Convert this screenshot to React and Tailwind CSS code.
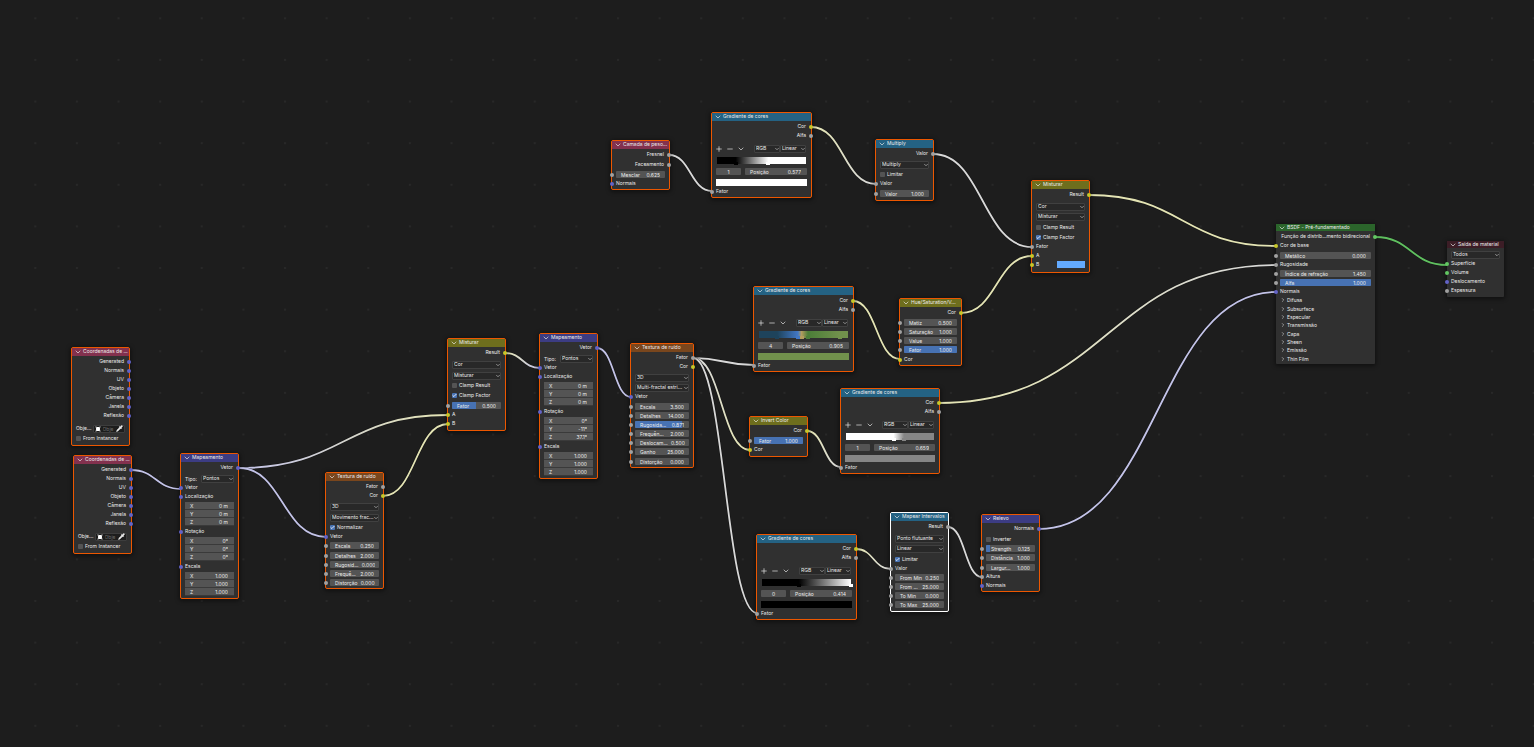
import React from "react";
import { Check, ChevronDown, ChevronRight, Minus, Pipette, Plus } from "lucide-react";

const SOCKET = {
  vector: "bg-[#6363c7]",
  value: "bg-[#a1a1a1]",
  color: "bg-[#c7c729]",
  shader: "bg-[#63c763]",
};

const WIRE = { vector: "#c3c3e8", value: "#d8d8d8", color: "#e4e4b4", shader: "#5fbf5f" };

const HEADER = {
  input: "bg-[#83314e]",
  vector: "bg-[#3c3c83]",
  texture: "bg-[#79461d]",
  color: "bg-[#6e6e1d]",
  converter: "bg-[#246283]",
  shader: "bg-[#2b652b]",
  output: "bg-[#3c1d26]",
};

const GAP = ["", "mt-px", "mt-[2px]", "mt-[3px]", "mt-1", "mt-[5px]"];

function Socket({ type, side }) {
  return (
    <span
      className={`absolute top-[3px] z-10 h-1 w-1 rounded-full ${side === "left" ? "left-[-2px]" : "right-[-2px]"} ${SOCKET[type]}`}
    />
  );
}

function Node({ title, tone, className, state = "selected", children }) {
  const edge = {
    selected: "rounded-[2px] border border-[#ed5700]",
    active: "rounded-[2px] border border-white",
    idle: "rounded-[1px]",
  }[state];
  return (
    <section
      className={`absolute bg-[#303030] shadow-[0_1px_4px_1px_rgba(0,0,0,0.45)] ${edge} ${className}`}
    >
      <header
        className={`mb-px flex items-start gap-px pl-[2px] ${state === "idle" ? "h-[7px]" : "h-2"} ${HEADER[tone]}`}
      >
        <button type="button" aria-label={`Recolher ${title}`} className="flex">
          <ChevronDown className="h-2 w-2" strokeWidth={2} />
        </button>
        <h2 className="whitespace-nowrap leading-[6px]">{title}</h2>
      </header>
      {children}
    </section>
  );
}

function Out({ children, type, gap = 0 }) {
  return (
    <div className={`relative flex h-[9px] items-center justify-end whitespace-nowrap pb-px pr-[5px] ${GAP[gap]}`}>
      {children}
      <Socket type={type} side="right" />
    </div>
  );
}

function In({ children, type, gap = 0, swatch }) {
  return (
    <div className={`relative flex h-[9px] items-center justify-between whitespace-nowrap px-1 pb-px ${GAP[gap]}`}>
      <Socket type={type} side="left" />
      {children}
      {swatch && <button type="button" aria-label="Cor B" className="h-[7px] w-7 bg-[#63aaff]" />}
    </div>
  );
}

function Drop({ value, label }) {
  return (
    <span className="relative flex h-2 min-w-0 flex-1 items-center">
      <select
        aria-label={label || value}
        defaultValue={value}
        className="h-2 w-full appearance-none overflow-hidden rounded-[1px] border border-[#404040] bg-[#282828] pl-px pr-1 leading-[5px]"
      >
        <option>{value}</option>
      </select>
      <ChevronDown className="pointer-events-none absolute right-0 h-[6px] w-[6px]" strokeWidth={2} />
    </span>
  );
}

function Select({ value, gap = 0 }) {
  return (
    <div className={`flex h-[9px] items-center px-1 ${GAP[gap]}`}>
      <Drop value={value} />
    </div>
  );
}

function Tick({ label, checked = false, gap = 0 }) {
  return (
    <label className={`relative flex h-[9px] items-center gap-[2px] whitespace-nowrap pl-1 ${GAP[gap]}`}>
      <span className="relative flex h-[5px] w-[5px]">
        <input
          type="checkbox"
          defaultChecked={checked}
          className="h-[5px] w-[5px] appearance-none rounded-[1px] bg-[#545454] checked:bg-[#4772b3]"
        />
        {checked && <Check className="pointer-events-none absolute inset-0 h-[5px] w-[5px] text-white" strokeWidth={4} />}
      </span>
      <span className="pb-px">{label}</span>
    </label>
  );
}

function Field({ label, value, gap = 0, fill = 0 }) {
  return (
    <div className={`relative flex h-[9px] items-center px-1 ${GAP[gap]}`}>
      <Socket type="value" side="left" />
      <label className="relative flex h-[7px] min-w-0 flex-1 items-center justify-between overflow-hidden rounded-[1px] bg-[#545454] pl-[5px] pr-[5px] leading-[6px]">
        {fill > 0 && <span className="absolute inset-y-0 left-0 bg-[#4772b3]" style={{ width: `${fill * 100}%` }} />}
        <span className="relative whitespace-nowrap">{label}</span>
        <input defaultValue={value} className="relative h-[6px] w-[17px] flex-none bg-transparent text-right" />
      </label>
    </div>
  );
}

function Axes({ name, values }) {
  return (
    <div className="mx-1 mt-px flex flex-col">
      {["X", "Y", "Z"].map((axis, i) => (
        <label key={axis} className="flex h-2 items-center justify-between border-b border-[#3a3a3a] bg-[#545454] pl-[5px] pr-[6px]">
          {axis}
          <input aria-label={`${name} ${axis}`} defaultValue={values[i]} className="h-[7px] w-5 bg-transparent text-right" />
        </label>
      ))}
    </div>
  );
}

function Mapping({ className, loose, rotation }) {
  return (
    <Node title="Mapeamento" tone="vector" className={className}>
      <Out type="vector" gap={loose ? 1 : 0}>Vetor</Out>
      <div className="mt-[2px] flex h-[9px] items-center gap-1 px-1">
        <span className="w-3">Tipo:</span>
        <Drop value="Pontos" label="Tipo" />
      </div>
      <In type="vector">Vetor</In>
      <In type="vector">Localização</In>
      <Axes name="Localização" values={["0 m", "0 m", "0 m"]} />
      <In type="vector" gap={1}>Rotação</In>
      <Axes name="Rotação" values={rotation} />
      <In type="vector" gap={1}>Escala</In>
      <Axes name="Escala" values={["1.000", "1.000", "1.000"]} />
    </Node>
  );
}

function Coordinates({ className }) {
  return (
    <Node title="Coordenadas de ..." tone="input" className={className}>
      {["Generated", "Normais", "UV", "Objeto", "Câmera", "Janela", "Reflexão"].map((name) => (
        <Out key={name} type="vector">{name}</Out>
      ))}
      <div className="mt-1 flex h-[9px] items-center justify-between px-1">
        <span className="pb-px">Obje...</span>
        <span className="flex h-2 w-8 items-center justify-between rounded-[1px] border border-[#3d3d3d] bg-[#1d1d1d] px-px">
          <svg viewBox="0 0 8 8" className="h-[6px] w-[6px]" fill="none">
            <path d="M0.6 2.4V0.6H2.4M5.6 0.6H7.4V2.4M7.4 5.6V7.4H5.6M2.4 7.4H0.6V5.6" stroke="#8a8a8a" strokeWidth="0.8" />
            <rect x="1.4" y="1.4" width="5.2" height="5.2" rx="0.6" fill="#fff" />
          </svg>
          <input aria-label="Objeto" placeholder="Obje" className="h-[6px] w-3 bg-transparent placeholder:text-[#6a6a6a]" />
          <button type="button" aria-label="Conta-gotas" className="flex">
            <Pipette className="h-[7px] w-[7px]" fill="currentColor" strokeWidth={2} />
          </button>
        </span>
      </div>
      <Tick label="From Instancer" gap={1} />
    </Node>
  );
}

function Ramp({ className, stops, index, position, swatchClass }) {
  const gradient = `linear-gradient(to right, ${stops.map(([p, c]) => `${c} ${p * 100}%`).join(", ")})`;
  return (
    <Node title="Gradiente de cores" tone="converter" className={className}>
      <Out type="color">Cor</Out>
      <Out type="value">Alfa</Out>
      <div className="mt-1 flex h-[9px] items-center justify-between pl-[3px] pr-[5px]">
        <div className="flex items-center gap-[3px]">
          <button type="button" aria-label="Adicionar"><Plus className="h-2 w-2" strokeWidth={2} /></button>
          <button type="button" aria-label="Remover"><Minus className="h-2 w-2" strokeWidth={2} /></button>
          <button type="button" aria-label="Ferramentas"><ChevronDown className="h-2 w-2" strokeWidth={2} /></button>
        </div>
        <div className="flex w-[52px]">
          <Drop value="RGB" label="Modo de cor" />
          <Drop value="Linear" label="Interpolação" />
        </div>
      </div>
      <div className="relative mx-[5px] mt-1 h-[7px]" style={{ background: gradient }}>
        {stops.map(([p, c]) => (
          <span
            key={p}
            className="absolute top-[5px] -ml-[2px] h-[3px] w-1"
            style={{ left: `${p * 100}%`, background: c }}
          />
        ))}
      </div>
      <div className="mx-1 mt-[3px] flex h-[9px] items-center gap-1">
        <input
          aria-label="Ponto ativo"
          defaultValue={index}
          className="h-[7px] w-[25px] rounded-[1px] bg-[#545454] text-center"
        />
        <label className="flex h-[7px] flex-1 items-center justify-between rounded-[1px] bg-[#545454] pl-[5px] pr-[6px]">
          Posição
          <input defaultValue={position} className="h-[7px] w-5 bg-transparent text-right" />
        </label>
      </div>
      <div className="mb-px mt-[3px] flex px-1">
        <button type="button" aria-label="Cor do ponto" className={`h-[7px] flex-1 ${swatchClass}`} />
      </div>
      <In type="value">Fator</In>
    </Node>
  );
}

const LINKS = [
  [131, 470, 181, 489, "vector", "vector"],
  [239, 468, 448, 415, "vector", "color"],
  [239, 468, 326, 537, "vector", "vector"],
  [383, 496, 448, 424, "color", "color"],
  [505, 353, 540, 368, "color", "vector"],
  [597, 348, 631, 397, "vector", "vector"],
  [693, 358, 754, 365, "value", "value"],
  [693, 358, 750, 450, "value", "color"],
  [693, 358, 757, 613, "value", "value"],
  [669, 155, 712, 191, "value", "value"],
  [811, 127, 876, 184, "color", "value"],
  [933, 154, 1032, 247, "value", "value"],
  [853, 301, 900, 359, "color", "color"],
  [961, 313, 1032, 256, "color", "color"],
  [1089, 195, 1276, 246, "color", "color"],
  [807, 431, 841, 467, "color", "value"],
  [939, 403, 1276, 265, "color", "value"],
  [856, 549, 891, 569, "color", "value"],
  [948, 527, 982, 577, "value", "value"],
  [1039, 529, 1276, 292, "vector", "vector"],
  [1375, 237, 1447, 265, "shader", "shader"],
];

function Wires() {
  return (
    <svg className="pointer-events-none absolute inset-0 h-full w-full" fill="none" aria-hidden="true">
      <defs>
        <pattern id="dots" x="14.5" y="-2.5" width="41.62" height="41.62" patternUnits="userSpaceOnUse">
          <circle cx="20.8" cy="20.8" r="1.1" fill="#2a2a2a" />
        </pattern>
        {LINKS.map(([x1, y1, x2, y2, a, b], i) => (
          <linearGradient key={i} id={`wire${i}`} gradientUnits="userSpaceOnUse" x1={x1} y1={y1} x2={x2} y2={y2}>
            <stop offset="0" stopColor={WIRE[a]} />
            <stop offset="1" stopColor={WIRE[b]} />
          </linearGradient>
        ))}
      </defs>
      <rect width="100%" height="100%" fill="url(#dots)" />
      {LINKS.map(([x1, y1, x2, y2], i) => {
        const h = (x2 - x1) / 2;
        const d = `M${x1} ${y1}C${x1 + h} ${y1} ${x2 - h} ${y2} ${x2} ${y2}`;
        return (
          <g key={i}>
            <path d={d} stroke="#111" strokeWidth="3" strokeOpacity="0.6" />
            <path d={d} stroke={`url(#wire${i})`} strokeWidth="1.8" />
          </g>
        );
      })}
    </svg>
  );
}

const PANELS = ["Difusa", "Subsurface", "Especular", "Transmissão", "Capa", "Sheen", "Emissão", "Thin Film"];

export default function App() {
  return (
    <main className="relative min-h-screen w-full overflow-hidden bg-[#1d1d1d] font-['Inter',sans-serif] text-[5px] leading-[8px] text-[#ececec]">
      <Wires />

      <Coordinates className="left-[71px] top-[347px] w-[59px] pb-[2px]" />
      <Coordinates className="left-[73px] top-[455px] w-[59px] pb-[2px]" />

      <Mapping className="left-[180px] top-[453px] w-[59px] pb-[2px]" loose rotation={["0°", "0°", "0°"]} />

      <Node title="Textura de ruído" tone="texture" className="left-[325px] top-[472px] w-[59px] pb-px">
        <Out type="value">Fator</Out>
        <Out type="color">Cor</Out>
        <Select value="3D" gap={2} />
        <Select value="Movimento frac..." gap={2} />
        <Tick label="Normalizar" checked gap={1} />
        <In type="vector">Vetor</In>
        <Field label="Escala" value="0.250" />
        <Field label="Detalhes" value="2.000" gap={1} />
        <Field label="Rugosid..." value="0.000" />
        <Field label="Frequê..." value="2.000" />
        <Field label="Distorção" value="0.000" />
      </Node>

      <Node title="Misturar" tone="color" className="left-[447px] top-[338px] w-[59px] pb-[2px]">
        <Out type="color">Result</Out>
        <Select value="Cor" gap={3} />
        <Select value="Misturar" gap={2} />
        <Tick label="Clamp Result" gap={1} />
        <Tick label="Clamp Factor" checked gap={1} />
        <Field label="Fator" value="0.500" fill={0.48} gap={1} />
        <In type="color">A</In>
        <In type="color">B</In>
      </Node>

      <Mapping className="left-[539px] top-[333px] w-[59px] pb-[2px]" rotation={["0°", "-11°", "37.1°"]} />

      <Node title="Textura de ruído" tone="texture" className="left-[630px] top-[343px] w-[64px] pb-px">
        <Out type="value">Fator</Out>
        <Out type="color">Cor</Out>
        <Select value="3D" gap={2} />
        <Select value="Multi-fractal estri..." gap={1} />
        <In type="vector">Vetor</In>
        <Field label="Escala" value="3.500" gap={1} />
        <Field label="Detalhes" value="14.000" />
        <Field label="Rugosida..." value="0.871" fill={0.87} />
        <Field label="Frequên..." value="2.000" />
        <Field label="Deslocam..." value="0.500" />
        <Field label="Ganho" value="25.000" />
        <Field label="Distorção" value="0.000" gap={1} />
      </Node>

      <Node title="Camada de peso..." tone="input" className="left-[611px] top-[140px] w-[59px] pb-px">
        <Out type="value">Fresnel</Out>
        <Out type="value" gap={1}>Faceamento</Out>
        <Field label="Mesclar" value="0.625" gap={1} />
        <In type="vector">Normais</In>
      </Node>

      <Ramp
        className="left-[711px] top-[112px] w-[101px] pb-px"
        stops={[[0.21, "#000000"], [0.577, "#ffffff"]]}
        index="1"
        position="0.577"
        swatchClass="bg-white"
      />
      <Ramp
        className="left-[753px] top-[286px] w-[101px] pb-px"
        stops={[[0.205, "#1e435b"], [0.437, "#4277c4"], [0.478, "#b29c5e"], [0.55, "#4b7d38"], [0.905, "#71914c"]]}
        index="4"
        position="0.905"
        swatchClass="bg-[#71914c]"
      />
      <Ramp
        className="left-[840px] top-[388px] w-[100px] pb-px"
        stops={[[0.54, "#ffffff"], [0.659, "#868686"]]}
        index="1"
        position="0.659"
        swatchClass="bg-[#868686]"
      />
      <Ramp
        className="left-[756px] top-[534px] w-[101px] pb-px"
        stops={[[0.414, "#000000"], [1, "#ffffff"]]}
        index="0"
        position="0.414"
        swatchClass="bg-black"
      />

      <Node title="Multiply" tone="converter" className="left-[875px] top-[139px] w-[59px] pb-[2px]">
        <Out type="value">Valor</Out>
        <Select value="Multiply" gap={2} />
        <Tick label="Limitar" gap={1} />
        <In type="value">Valor</In>
        <Field label="Valor" value="1.000" gap={1} />
      </Node>

      <Node title="Hue/Saturation/V..." tone="color" className="left-[899px] top-[298px] w-[63px] pb-px">
        <Out type="color">Cor</Out>
        <Field label="Matiz" value="0.500" gap={1} />
        <Field label="Saturação" value="1.000" />
        <Field label="Value" value="1.000" />
        <Field label="Fator" value="1.000" fill={1} />
        <In type="color" gap={1}>Cor</In>
      </Node>

      <Node title="Invert Color" tone="color" className="left-[749px] top-[416px] w-[59px] pb-[2px]">
        <Out type="color">Cor</Out>
        <Field label="Fator" value="1.000" fill={1} gap={1} />
        <In type="color">Cor</In>
      </Node>

      <Node title="Misturar" tone="color" className="left-[1031px] top-[180px] w-[59px] pb-[3px]">
        <Out type="color">Result</Out>
        <Select value="Cor" gap={3} />
        <Select value="Misturar" gap={1} />
        <Tick label="Clamp Result" gap={2} />
        <Tick label="Clamp Factor" checked gap={1} />
        <In type="value">Fator</In>
        <In type="color">A</In>
        <In type="color" swatch>B</In>
      </Node>

      <Node title="Mapear Intervalos" tone="converter" state="active" className="left-[890px] top-[512px] w-[59px] pb-[2px]">
        <Out type="value">Result</Out>
        <Select value="Ponto flutuante" gap={3} />
        <Select value="Linear" gap={1} />
        <Tick label="Limitar" checked gap={2} />
        <In type="value">Valor</In>
        <Field label="From Min" value="0.250" />
        <Field label="From ..." value="25.000" />
        <Field label="To Min" value="0.000" />
        <Field label="To Max" value="25.000" />
      </Node>

      <Node title="Relevo" tone="vector" className="left-[981px] top-[514px] w-[59px] pb-px">
        <Out type="vector">Normais</Out>
        <Tick label="Inverter" gap={2} />
        <Field label="Strength" value="0.125" fill={0.09} />
        <Field label="Distância" value="1.000" />
        <Field label="Largur..." value="1.000" gap={1} />
        <In type="value">Altura</In>
        <In type="vector">Normais</In>
      </Node>

      <Node title="BSDF - Pré-fundamentado" tone="shader" state="idle" className="left-[1276px] top-[224px] w-[99px] pb-px">
        <Out type="shader">Função de distrib...mento bidirecional</Out>
        <In type="color">Cor de base</In>
        <Field label="Metálico" value="0.000" gap={1} />
        <In type="value">Rugosidade</In>
        <Field label="Índice de refração" value="1.450" />
        <Field label="Alfa" value="1.000" fill={1} />
        <In type="vector">Normais</In>
        <div className="grid h-[67px] grid-rows-8 pl-1">
          {PANELS.map((name) => (
            <button key={name} type="button" className="flex items-center gap-px">
              <ChevronRight className="h-[6px] w-[6px]" strokeWidth={2} />
              {name}
            </button>
          ))}
        </div>
      </Node>

      <Node title="Saída de material" tone="output" state="idle" className="left-[1447px] top-[241px] w-[57px] pb-[2px]">
        <Select value="Todos" gap={2} />
        <In type="shader">Superfície</In>
        <In type="shader">Volume</In>
        <In type="vector">Deslocamento</In>
        <In type="value">Espessura</In>
      </Node>
    </main>
  );
}
